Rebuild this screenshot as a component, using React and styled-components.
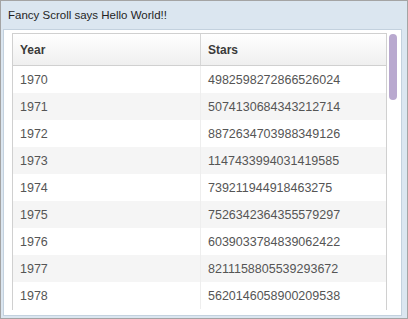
import React from "react";
import styled, { createGlobalStyle } from "styled-components";

const GlobalStyle = createGlobalStyle`
    html, body {
        margin: 0;
        padding: 0;
        background: #ffffff;
    }
    body {
        font-family: "Liberation Sans", Arial, sans-serif;
    }
`;

const Panel = styled.div`
    width: 408px;
    height: 319px;
    box-sizing: border-box;
    display: flex;
    flex-direction: column;
    border: 1px solid #a4a4a4;
    background-color: #dbe6f0;
`;

const Title = styled.div`
    height: 28px;
    flex: none;
    display: flex;
    align-items: center;
    padding-left: 7px;
    font-size: 11.5px;
    color: #1f1f1f;
`;

const Body = styled.div`
    flex: 1;
    display: flex;
    margin: 0 5px 2px 2px;
    padding: 3px 0 5px 8px;
    border: 1px solid #c3d1de;
    background-color: #ffffff;
    min-height: 0;
`;

const Grid = styled.div`
    flex: 1;
    display: flex;
    flex-direction: column;
    border: 1px solid #d0d0d0;
    border-bottom: none;
    overflow: hidden;
`;

const HeaderRow = styled.div`
    display: flex;
    flex: none;
    height: 31px;
    border-bottom: 1px solid #d0d0d0;
    background: linear-gradient(#ffffff, #efefef);
`;

const HeaderCell = styled.div`
    display: flex;
    align-items: center;
    box-sizing: border-box;
    padding: 0 7px;
    font-size: 12px;
    font-weight: bold;
    color: #3a3a3a;
    ${ ( { $first } ) => $first ? "width: 188px; border-right: 1px solid #d6d6d6;" : "flex: 1;" }
`;

const Row = styled.div`
    display: flex;
    flex: none;
    height: 27px;
    background-color: ${ ( { $odd } ) => $odd ? "#f5f5f5" : "#ffffff" };
`;

const Cell = styled.div`
    display: flex;
    align-items: center;
    box-sizing: border-box;
    padding: 0 7px;
    font-size: 12.5px;
    color: #555555;
    ${ ( { $first } ) => $first ? "width: 188px; border-right: 1px solid #eeeeee;" : "flex: 1;" }
`;

const ScrollTrack = styled.div`
    width: 14px;
    flex: none;
    padding-top: 1px;
`;

const Thumb = styled.div`
    width: 8px;
    height: 66px;
    margin-left: 2px;
    border-radius: 4px;
    background-color: #b9a9cf;
`;

const rows = [
    [ 1970, "4982598272866526024" ],
    [ 1971, "5074130684343212714" ],
    [ 1972, "8872634703988349126" ],
    [ 1973, "1147433994031419585" ],
    [ 1974, "739211944918463275" ],
    [ 1975, "7526342364355579297" ],
    [ 1976, "6039033784839062422" ],
    [ 1977, "8211158805539293672" ],
    [ 1978, "5620146058900209538" ],
];

const App = () => (
    <>
        <GlobalStyle />
        <Panel>
            <Title>Fancy Scroll says Hello World!!</Title>
            <Body>
                <Grid>
                    <HeaderRow>
                        <HeaderCell $first>Year</HeaderCell>
                        <HeaderCell>Stars</HeaderCell>
                    </HeaderRow>
                    { rows.map( ( [ year, stars ], i ) => (
                        <Row key={ year } $odd={ i % 2 === 1 }>
                            <Cell $first>{ year }</Cell>
                            <Cell>{ stars }</Cell>
                        </Row>
                    ) ) }
                </Grid>
                <ScrollTrack>
                    <Thumb />
                </ScrollTrack>
            </Body>
        </Panel>
    </>
);

export default App;
